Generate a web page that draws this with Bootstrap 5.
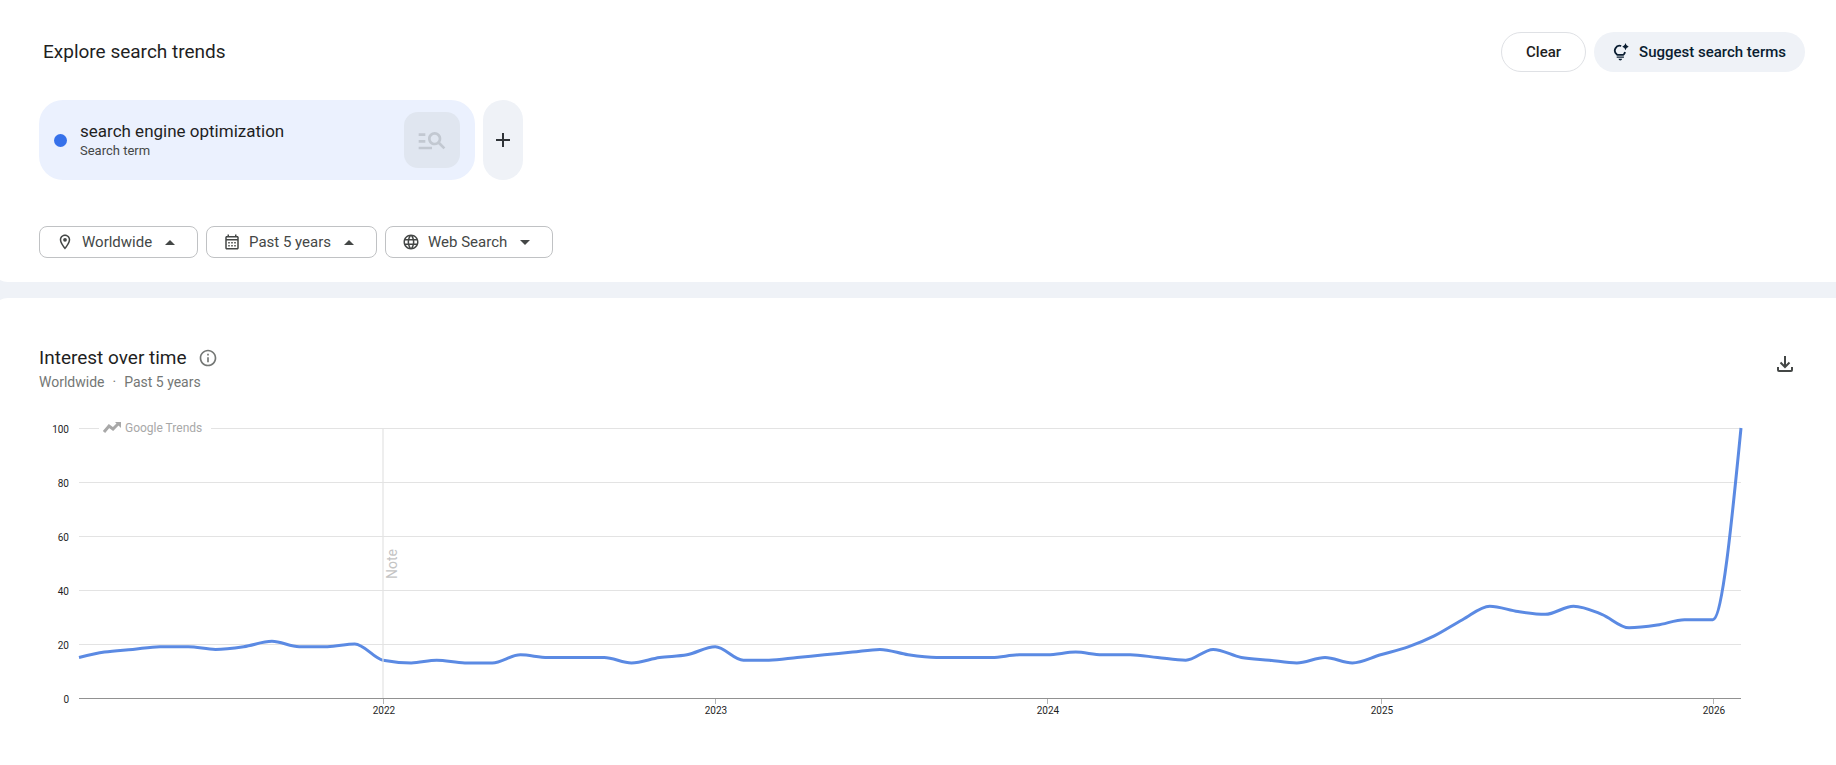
<!DOCTYPE html>
<html lang="en">
<head>
<meta charset="utf-8">
<meta name="viewport" content="width=device-width, initial-scale=1">
<title>Explore search trends</title>
<link href="https://cdn.jsdelivr.net/npm/bootstrap@5.3.0/dist/css/bootstrap.min.css" rel="stylesheet">
<style>
body{background:#eff2f7;color:#1f1f1f;font-family:Roboto,"Open Sans",sans-serif;overflow-x:hidden}
.panel{background:#fff;border-radius:16px;margin:0 -16px 0 -8px;padding:0 47px}
.panel-search{padding-top:32px;padding-bottom:24px;border-top-left-radius:0}
.panel-chart{padding-top:48px}
.t-title{font-size:19px;line-height:24px;font-weight:400}
.pill{height:40px;border-radius:20px;font-size:15px;line-height:20px;font-weight:500;padding:0 18px}
.pill-clear{border:1px solid #dfe1e5;color:#1f1f1f;padding:0 24px}
.pill-suggest{background:#eff2f7;color:#0a1d31}
.term{width:436px;height:80px;border-radius:24px;background:#ebf1fe;padding:0 15px}
.dot{width:13px;height:13px;border-radius:50%;background:#3671ea;margin-right:13px}
.term-name{font-size:17px;line-height:22px}
.term-kind{font-size:13px;line-height:18px;color:#444746}
.term-pic{width:56px;height:56px;border-radius:14px;background:#e0e6f0}
.add{width:40px;height:80px;border-radius:20px;background:#eff2f7;color:#303438}
.filters{margin-top:46px}
.filter{height:32px;border:1px solid #c0c2c4;border-radius:8px;color:#444746;padding:0 22px 0 16px}
.filter select{appearance:none;border:0;background:none;padding:0;margin:0 12px 0 8px;color:inherit;font-size:15px;line-height:20px}
.filter-caret{pointer-events:none}
.about{margin-left:11px}
.download{margin:6px 8px 0 0}
.t-sub{font-size:14px;line-height:20px;color:#747775;margin-top:2px}
.plot{display:block;width:100%;height:312px;margin-top:19px;font-size:10px}
</style>
</head>
<body class="d-flex flex-column min-vh-100">
<section class="panel panel-search">
  <header class="d-flex align-items-center justify-content-between ps-1">
    <h1 class="t-title m-0">Explore search trends</h1>
    <div class="d-flex gap-2">
      <button type="button" class="btn pill pill-clear">Clear</button>
      <button type="button" class="btn pill pill-suggest d-flex align-items-center gap-2">
        <svg width="18" height="18" viewBox="0 0 18 18" fill="none" stroke="currentColor" stroke-width="1.800" aria-hidden="true"><path d="M8.200 3A4.800 4.800 0 0 0 3.700 11.300Q4.300 11.900 5 11.900H9.500Q10.200 11.900 10.800 11.300A4.800 4.800 0 0 0 12 9"/><path fill="currentColor" stroke="none" d="M12.500 0Q13 3 15.700 3.700Q13 4.400 12.500 7.200Q12 4.400 9.300 3.700Q12 3 12.500 0zM3.700 13.500h7.200v1.300H3.700zM5.400 15.800h3.800q-.4 1.600-1.900 1.600t-1.900-1.600z"/></svg>
        <span>Suggest search terms</span>
      </button>
    </div>
  </header>
  <div class="d-flex gap-2 mt-4 pt-1">
    <div class="term d-flex align-items-center">
      <span class="dot flex-shrink-0"></span>
      <div class="flex-grow-1">
        <div class="term-name">search engine optimization</div>
        <div class="term-kind">Search term</div>
      </div>
      <div class="term-pic d-flex align-items-center justify-content-center">
        <svg width="32" height="32" viewBox="0 0 24 24" fill="#c2c8d1" aria-hidden="true"><path d="M7 9H2V7h5v2zm0 3H2v2h5v-2zm13.590 7l-3.830-3.830c-.8.520-1.740.830-2.760.830-2.760 0-5-2.240-5-5s2.240-5 5-5 5 2.240 5 5c0 1.020-.310 1.960-.830 2.750L22 17.590 20.590 19zM17 11c0-1.650-1.350-3-3-3s-3 1.350-3 3 1.350 3 3 3 3-1.350 3-3zM2 19h10v-2H2v2z"/></svg>
      </div>
    </div>
    <button type="button" class="btn add border-0 p-0 d-flex align-items-center justify-content-center" aria-label="Add term">
      <svg width="14" height="14" viewBox="0 0 14 14" fill="none" stroke="currentColor" stroke-width="2" aria-hidden="true"><path d="M7 0V14M0 7H14"/></svg>
    </button>
  </div>
  <form class="filters d-flex gap-2">
    <div class="filter d-flex align-items-center">
      <label for="place" class="d-flex"><svg width="18" height="18" viewBox="0 0 24 24" fill="currentColor" role="img" aria-label="Location"><path d="M12 2C8.130 2 5 5.130 5 9c0 5.250 7 13 7 13s7-7.750 7-13c0-3.870-3.130-7-7-7zM7 9c0-2.760 2.240-5 5-5s5 2.240 5 5c0 2.880-2.880 7.190-5 9.880C9.920 16.210 7 11.850 7 9z"/><circle cx="12" cy="9" r="2.500"/></svg></label>
      <select id="place"><option>Worldwide</option></select>
      <svg class="filter-caret" width="10" height="5" viewBox="0 0 10 5" fill="currentColor" aria-hidden="true"><path d="M0 5 5 0 10 5z"/></svg>
    </div>
    <div class="filter d-flex align-items-center">
      <label for="period" class="d-flex"><svg width="18" height="18" viewBox="0 0 24 24" fill="currentColor" role="img" aria-label="Period"><path d="M19 4h-1V2h-2v2H8V2H6v2H5c-1.100 0-2 .9-2 2v14c0 1.100.9 2 2 2h14c1.100 0 2-.9 2-2V6c0-1.100-.9-2-2-2zm0 16H5V10h14v10zM5 8V6h14v2H5zm2 4h2v2H7zm4 0h2v2h-2zm4 0h2v2h-2zM7 16h2v2H7zm4 0h2v2h-2zm4 0h2v2h-2z"/></svg></label>
      <select id="period"><option>Past 5 years</option></select>
      <svg class="filter-caret" width="10" height="5" viewBox="0 0 10 5" fill="currentColor" aria-hidden="true"><path d="M0 5 5 0 10 5z"/></svg>
    </div>
    <div class="filter d-flex align-items-center">
      <label for="source" class="d-flex"><svg width="18" height="18" viewBox="0 0 24 24" fill="currentColor" role="img" aria-label="Source"><path d="M11.990 2C6.470 2 2 6.480 2 12s4.470 10 9.990 10C17.520 22 22 17.520 22 12S17.520 2 11.990 2zm6.930 6h-2.950c-.320-1.250-.780-2.450-1.380-3.560 1.840.630 3.370 1.910 4.330 3.560zM12 4.040c.830 1.200 1.480 2.530 1.910 3.960h-3.820c.430-1.430 1.080-2.760 1.910-3.960zM4.260 14C4.100 13.360 4 12.690 4 12s.1-1.360.260-2h3.380c-.080.660-.140 1.320-.140 2s.060 1.340.140 2H4.260zm.820 2h2.950c.320 1.250.780 2.450 1.380 3.560-1.840-.630-3.370-1.900-4.330-3.560zm2.950-8H5.080c.960-1.660 2.490-2.930 4.330-3.560C8.810 5.550 8.350 6.750 8.030 8zM12 19.960c-.830-1.200-1.480-2.530-1.910-3.960h3.820c-.430 1.430-1.080 2.760-1.910 3.960zM14.340 14H9.660c-.090-.660-.160-1.320-.160-2s.070-1.350.160-2h4.680c.090.650.160 1.320.160 2s-.070 1.340-.160 2zm.250 5.560c.6-1.110 1.060-2.310 1.380-3.560h2.950c-.960 1.650-2.490 2.930-4.330 3.560zM16.360 14c.080-.660.140-1.320.140-2s-.060-1.340-.140-2h3.380c.160.640.260 1.310.260 2s-.1 1.360-.260 2h-3.380z"/></svg></label>
      <select id="source"><option>Web Search</option></select>
      <svg class="filter-caret" width="10" height="5" viewBox="0 0 10 5" fill="currentColor" aria-hidden="true"><path d="M0 0 5 5 10 0z"/></svg>
    </div>
  </form>
</section>
<section class="panel panel-chart mt-3 flex-grow-1 rounded-bottom-0">
  <header class="d-flex align-items-start justify-content-between">
    <div>
      <div class="d-flex align-items-center">
        <h2 class="t-title m-0">Interest over time</h2>
        <button type="button" class="btn about border-0 p-0 d-flex" aria-label="About this chart">
          <svg width="20" height="20" viewBox="0 0 24 24" fill="#747775" aria-hidden="true"><path d="M11 7h2v2h-2zm0 4h2v6h-2zm1-9C6.480 2 2 6.480 2 12s4.480 10 10 10 10-4.480 10-10S17.520 2 12 2zm0 18c-4.410 0-8-3.590-8-8s3.590-8 8-8 8 3.590 8 8-3.590 8-8 8z"/></svg>
        </button>
      </div>
      <div class="t-sub d-flex gap-2"><span>Worldwide</span><span>·</span><span>Past 5 years</span></div>
    </div>
    <button type="button" class="btn download border-0 p-0 d-flex" aria-label="Download">
      <svg width="24" height="24" viewBox="0 0 24 24" fill="none" stroke="#444746" stroke-width="2" aria-hidden="true"><path d="M12 4V15M7.500 10.500 12 15 16.500 10.500M5 15V18Q5 19 6 19H18Q19 19 19 18V15"/></svg>
    </button>
  </header>
  <svg id="plot" class="plot" role="img" aria-label="Interest over time, monthly"></svg>
</section>
<script src="https://cdn.jsdelivr.net/npm/bootstrap@5.3.0/dist/js/bootstrap.bundle.min.js"></script>
<script>
// Monthly interest, February 2021 to February 2026
const values=[15,17,18,19,19,18,19,21,19,19,20,14,13,14,13,13,16,15,15,15,13,15,16,19,14,14,15,16,17,18,16,15,15,15,16,16,17,16,16,15,14,18,15,14,13,15,13,16,19,23,29,34,32,31,34,31,26,27,29,29,100];
const day=i=>Date.UTC(2021,1+i,1)/864e5;
const first=day(0),last=day(values.length-1);
const svg=document.getElementById('plot');
function draw(){
  const left=40,right=svg.clientWidth-64,top=17,height=270,base=top+height;
  const X=d=>left+(d-first)/(last-first)*(right-left),Y=v=>base-v/100*height;
  const pts=values.map((v,i)=>[X(day(i)),Y(v)]),n=pts.length;
  const slope=pts.slice(1).map((p,i)=>(p[1]-pts[i][1])/(p[0]-pts[i][0]));
  // Monotone cubic tangents
  const m=pts.map((p,i)=>{
    if(i===0||i===n-1)return 0;
    const a=slope[i-1],b=slope[i],h0=p[0]-pts[i-1][0],h1=pts[i+1][0]-p[0];
    if(a*b<=0)return 0;
    return Math.sign(a)*Math.min(Math.abs(a)*2,Math.abs(b)*2,Math.abs(a*h1+b*h0)/(h0+h1));
  });
  m[0]=(3*slope[0]-m[1])/2;
  m[n-1]=(3*slope[n-2]-m[n-2])/2;
  let d='M'+pts[0];
  for(let i=1;i<n;i++){
    const a=pts[i-1],b=pts[i],k=(b[0]-a[0])/3;
    d+='C'+[a[0]+k,a[1]+k*m[i-1],b[0]-k,b[1]-k*m[i],b[0],b[1]];
  }
  let s='';
  for(let v=0;v<=100;v+=20){
    const y=Math.round(Y(v))+.5;
    s+=`<path d="M${left} ${y}H${right}" stroke="${v?'#e3e3e3':'#919191'}"/>`;
    s+=`<text x="30" y="${y+4}" text-anchor="end" fill="#1f1f1f">${v}</text>`;
  }
  for(let yr=2022;yr<=2026;yr++){
    const x=Math.round(X(Date.UTC(yr,0,1)/864e5));
    s+=`<path d="M${x+.5} ${base+1}v5" stroke="#b4b4b4"/><text x="${x+1}" y="${base+16}" text-anchor="middle" fill="#1f1f1f">${yr}</text>`;
  }
  s+=`<path d="${d}" fill="none" stroke="#5b8ae3" stroke-width="3"/>`;
  const nx=Math.round(X(Date.UTC(2022,0,1)/864e5));
  s+=`<path d="M${nx} ${top}V${base}" stroke="#e3e3e3" stroke-opacity=".6" stroke-width="2"/>`;
  s+=`<text transform="translate(${nx+14} ${top+151}) rotate(-90)" font-size="14" fill="#c4c4c4">Note</text>`;
  s+=`<path d="M${left+20} ${top-8}h112v16h-112z" fill="#fff"/>`;
  s+=`<path transform="translate(${left+23} ${top-7})" d="M2 11 7 5 11 8 17 2" fill="none" stroke="#a8a8a8" stroke-width="3"/><path transform="translate(${left+23} ${top-7})" d="M13 1H19V7z" fill="#a8a8a8"/>`;
  s+=`<text x="${left+46}" y="${top+4}" font-size="12" fill="#a8a8a8">Google Trends</text>`;
  svg.innerHTML=s;
}
draw();
addEventListener('resize',draw);
</script>
</body>
</html>
